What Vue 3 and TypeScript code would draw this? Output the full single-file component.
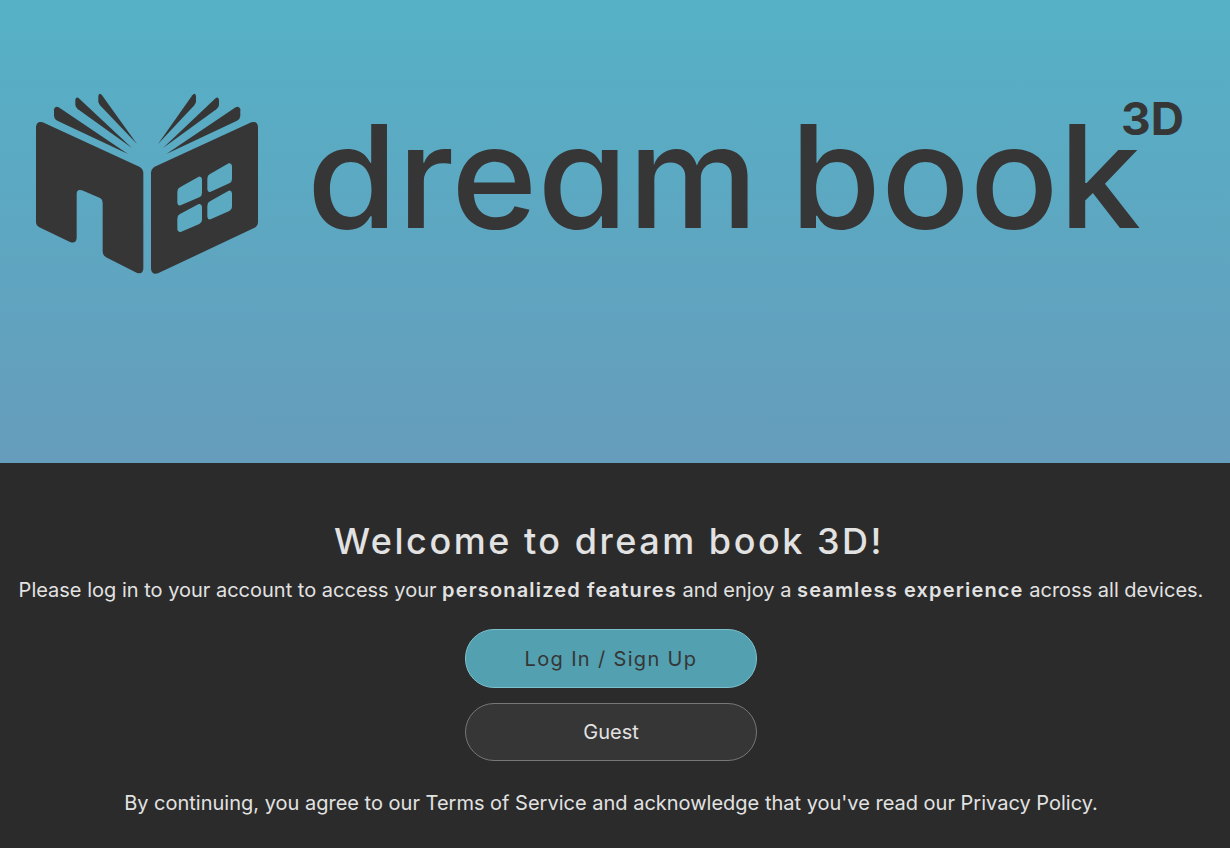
<script setup lang="ts">
const windowPanes = [
  'M480 322 Q472 326 472 336 L472 368 Q473 378 482 376 L538 352 Q546 348 546 340 L546 298 Q545 288 536 290 Z',
  'M570 282 Q562 286 562 296 L562 328 Q563 338 572 335 L628 310 Q636 306 636 298 L636 258 Q635 248 626 250 Z',
  'M480 402 Q472 406 472 416 L472 448 Q473 458 482 456 L538 432 Q546 428 546 420 L546 380 Q545 370 536 372 Z',
  'M570 364 Q562 368 562 378 L562 410 Q563 420 572 418 L628 393 Q636 389 636 381 L636 340 Q635 330 626 332 Z',
]
</script>

<template>
  <main class="page">
    <section class="hero">
      <svg class="logo" viewBox="0 0 1230 463" role="img" aria-label="dream book 3D">
        <g transform="translate(20 80) scale(0.33333)">
          <path d="M48 140 Q50 122 68 127 L358 260 Q370 266 370 280 L370 566 Q368 584 350 578 L258 532 Q248 526 248 514 L248 368 Q248 358 240 354 L186 331 Q170 326 170 342 L170 474 Q168 492 150 486 L58 442 Q48 436 48 426 Z" />
          <path d="M714 140 Q712 122 694 127 L404 260 Q393 266 393 280 L393 566 Q395 586 414 580 L702 444 Q714 438 714 426 Z" />
          <path v-for="(d, i) in windowPanes" :key="i" class="pane" :d="d" />
          <path d="M102 88 Q105 76 116 82 L324 222 L112 122 Q102 116 102 108 Z" />
          <path d="M166 60 Q168 48 178 56 L336 204 L174 88 Q166 82 166 74 Z" />
          <path d="M235 48 Q238 36 246 46 L351 192 L240 76 Q235 70 235 64 Z" />
          <path d="M661 88 Q658 76 647 82 L439 222 L651 122 Q661 116 661 108 Z" />
          <path d="M597 60 Q595 48 585 56 L429 204 L589 88 Q597 82 597 74 Z" />
          <path d="M528 48 Q525 36 517 46 L414 192 L523 76 Q528 70 528 64 Z" />
        </g>
        <text class="word" x="307" y="228" textLength="451" lengthAdjust="spacingAndGlyphs">dream</text>
        <text class="word" x="790" y="228" textLength="351" lengthAdjust="spacingAndGlyphs">book</text>
        <text class="three" x="1121" y="135" textLength="63" lengthAdjust="spacingAndGlyphs">3D</text>
      </svg>
    </section>

    <section class="panel">
      <h1>Welcome to dream book 3D!</h1>
      <p class="lead">
        Please log in to your account to access your <strong>personalized features</strong> and enjoy a
        <strong>seamless experience</strong> across all devices.
      </p>
      <div class="actions">
        <button class="btn primary" type="button">Log In / Sign Up</button>
        <button class="btn" type="button">Guest</button>
      </div>
      <p class="legal">By continuing, you agree to our Terms of Service and acknowledge that you've read our Privacy Policy.</p>
    </section>
  </main>
</template>

<style scoped>
.page {
  display: flex;
  flex-direction: column;
  height: 848px;
  overflow: hidden;
  font-family: Inter, "Liberation Sans", sans-serif;
}

.hero {
  flex: 0 0 463px;
  background: linear-gradient(180deg, #55b1c6 0%, #669cbc 100%);
}

.logo {
  display: block;
  width: 1230px;
  height: 463px;
  fill: #363636;
}

.pane {
  fill: #5ca9c2;
}

.word {
  font-size: 143px;
  font-weight: 540;
  font-feature-settings: "cv11";
}

.three {
  font-size: 45px;
  font-weight: 700;
}

.panel {
  flex: 1;
  display: flex;
  flex-direction: column;
  align-items: center;
  padding: 56px 8px 0 0;
  background: #2b2b2b;
  color: #e2e2e2;
}

h1 {
  margin: 0 4px 0 0;
  font-size: 36px;
  line-height: 44px;
  font-weight: 500;
  letter-spacing: 0.07em;
}

.lead {
  margin: 13px 0 0;
  font-size: 20px;
  line-height: 28px;
  white-space: nowrap;
}

.lead strong {
  font-weight: 600;
  letter-spacing: 0.058em;
}

.actions {
  display: flex;
  flex-direction: column;
  gap: 15px;
  margin-top: 25px;
}

.btn {
  width: 292px;
  height: 58px;
  border: 1px solid #777;
  border-radius: 29px;
  background: #363636;
  color: #e2e2e2;
  font: 400 20px Inter, "Liberation Sans", sans-serif;
}

.btn.primary {
  height: 59px;
  border-color: #7cc0cc;
  background: #52a0b0;
  color: #363636;
  letter-spacing: 0.067em;
}

.legal {
  margin: 28px 0 0;
  font-size: 20px;
  line-height: 28px;
  white-space: nowrap;
}
</style>
